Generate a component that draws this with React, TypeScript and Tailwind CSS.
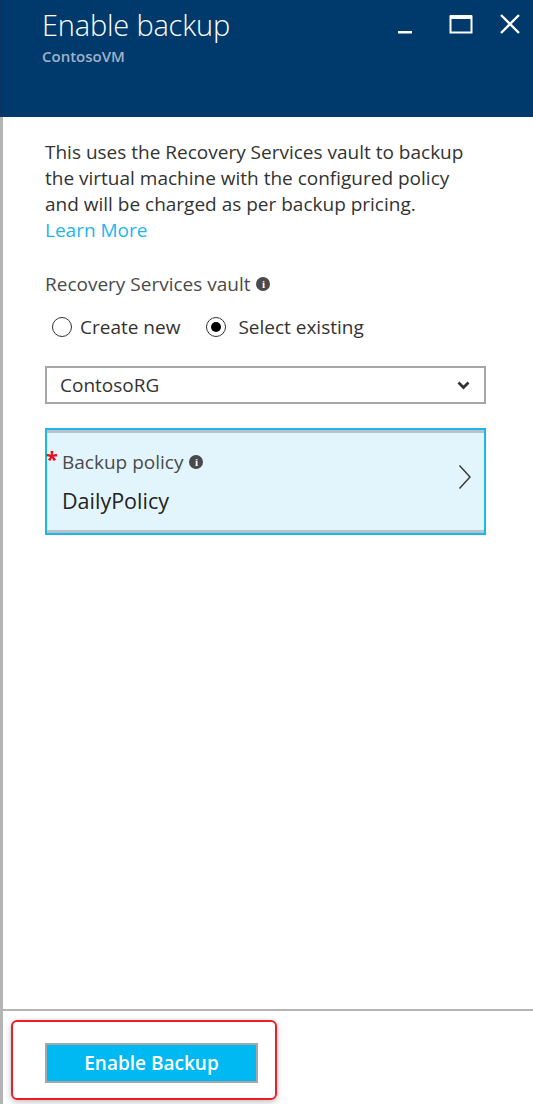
import React from "react";

function InfoDot() {
  return (
    <span className="inline-flex w-[14px] h-[14px] rounded-full bg-[#4a4a4a] items-center justify-center text-white text-[11px] font-bold leading-none ml-[6px] align-middle" style={{ fontFamily: "'Liberation Serif', serif" }}>
      i
    </span>
  );
}

export default function App() {
  return (
    <div className="w-[533px] h-[1104px] flex flex-col bg-white overflow-hidden text-[#333]" style={{ fontFamily: "'Open Sans', sans-serif" }}>
      {/* header */}
      <div className="h-[117px] shrink-0 bg-[#003a6d] border-l-2 border-[#0d3360] flex justify-between pl-[40px] pr-[12px]">
        <div className="pt-[5px]">
          <h1 className="text-[29px] font-light text-white leading-[40px] tracking-[-0.2px]">Enable backup</h1>
          <p className="text-[15px] font-semibold text-[#9fb3c8] leading-[18px] mt-[2px]">ContosoVM</p>
        </div>
        <div className="flex items-start gap-[26px] pt-[14px]">
          <svg width="16" height="22" viewBox="0 0 16 22" className="mr-[10px]">
            <rect x="1" y="17" width="14" height="2.5" fill="white" />
          </svg>
          <svg width="24" height="22" viewBox="0 0 24 22">
            <rect x="1.5" y="2.5" width="21" height="16" fill="none" stroke="white" strokeWidth="2" />
            <rect x="1" y="1" width="22" height="4" fill="white" />
          </svg>
          <svg width="22" height="22" viewBox="0 0 22 22">
            <path d="M2 1 L20 19 M20 1 L2 19" stroke="white" strokeWidth="2.4" />
          </svg>
        </div>
      </div>

      {/* body */}
      <div className="flex-1 flex flex-col border-l-[3px] border-[#b4b4b4]">
        <div className="flex-1 pl-[42px] pr-[47px] pt-[22px]">
          <p className="text-[19px] leading-[26px] text-[#333]">
            This uses the Recovery Services vault to backup the virtual machine with the configured policy and will be charged as per backup pricing.
            <br />
            <a href="#" className="text-[#1eb6ec]">Learn More</a>
          </p>

          <div className="mt-[28px] text-[19px] leading-[26px] text-[#4a4a4a] flex items-center">
            Recovery Services vault
            <InfoDot />
          </div>

          <div className="mt-[17px] flex items-center text-[19px] leading-[26px] text-[#333]">
            <span className="w-[20px] h-[20px] rounded-full border-[1.5px] border-[#333] ml-[7px]" />
            <span className="ml-[8px]">Create new</span>
            <span className="w-[20px] h-[20px] rounded-full border-[1.5px] border-[#333] ml-[26px] flex items-center justify-center">
              <span className="w-[10px] h-[10px] rounded-full bg-black" />
            </span>
            <span className="ml-[12px]">Select existing</span>
          </div>

          <div className="mt-[26px] h-[38px] border-2 border-[#a6a6a6] flex items-center justify-between pl-[13px] pr-[14px]">
            <span className="text-[19px] text-[#333]">ContosoRG</span>
            <svg width="13" height="9" viewBox="0 0 13 9">
              <path d="M1.5 1.5 L6.5 6.5 L11.5 1.5" fill="none" stroke="#333" strokeWidth="2.8" />
            </svg>
          </div>

          <div className="mt-[24px] h-[107px] border-2 border-[#1ab6ec] flex">
            <div className="flex-1 border-y-[3px] border-[#b8c2c8] bg-[#e3f5fc] flex items-start justify-between pr-[12px]">
              <div className="flex flex-col pt-[17px]">
                <div className="flex items-start">
                  <span className="text-[#e81123] text-[22px] font-bold leading-[20px] w-[16px] mt-[-2px] ml-[-1px]">*</span>
                  <span className="text-[19px] leading-[24px] text-[#4a4a4a] flex items-center">
                    Backup policy
                    <InfoDot />
                  </span>
                </div>
                <span className="ml-[15px] mt-[13px] text-[21.5px] leading-[28px] text-[#222]">DailyPolicy</span>
              </div>
              <svg width="14" height="26" viewBox="0 0 14 26" className="self-center mt-[-10px]">
                <path d="M1.5 1.5 L12 13 L1.5 24.5" fill="none" stroke="#333" strokeWidth="1.4" />
              </svg>
            </div>
          </div>
        </div>

        {/* footer */}
        <div className="h-[95px] shrink-0 border-t-2 border-[#b4b4b4] pl-[8px] pt-[9px]">
          <div className="w-[266px] h-[80px] rounded-[6px] border-2 border-[#ee1c24] shadow-[0_2px_6px_rgba(0,0,0,0.25)] pl-[32px] pt-[21px]">
            <button className="w-[213px] h-[40px] bg-[#00b9f2] border-2 border-[#a6a6a6] text-white text-[19px] font-semibold">
              Enable Backup
            </button>
          </div>
        </div>
      </div>
    </div>
  );
}
